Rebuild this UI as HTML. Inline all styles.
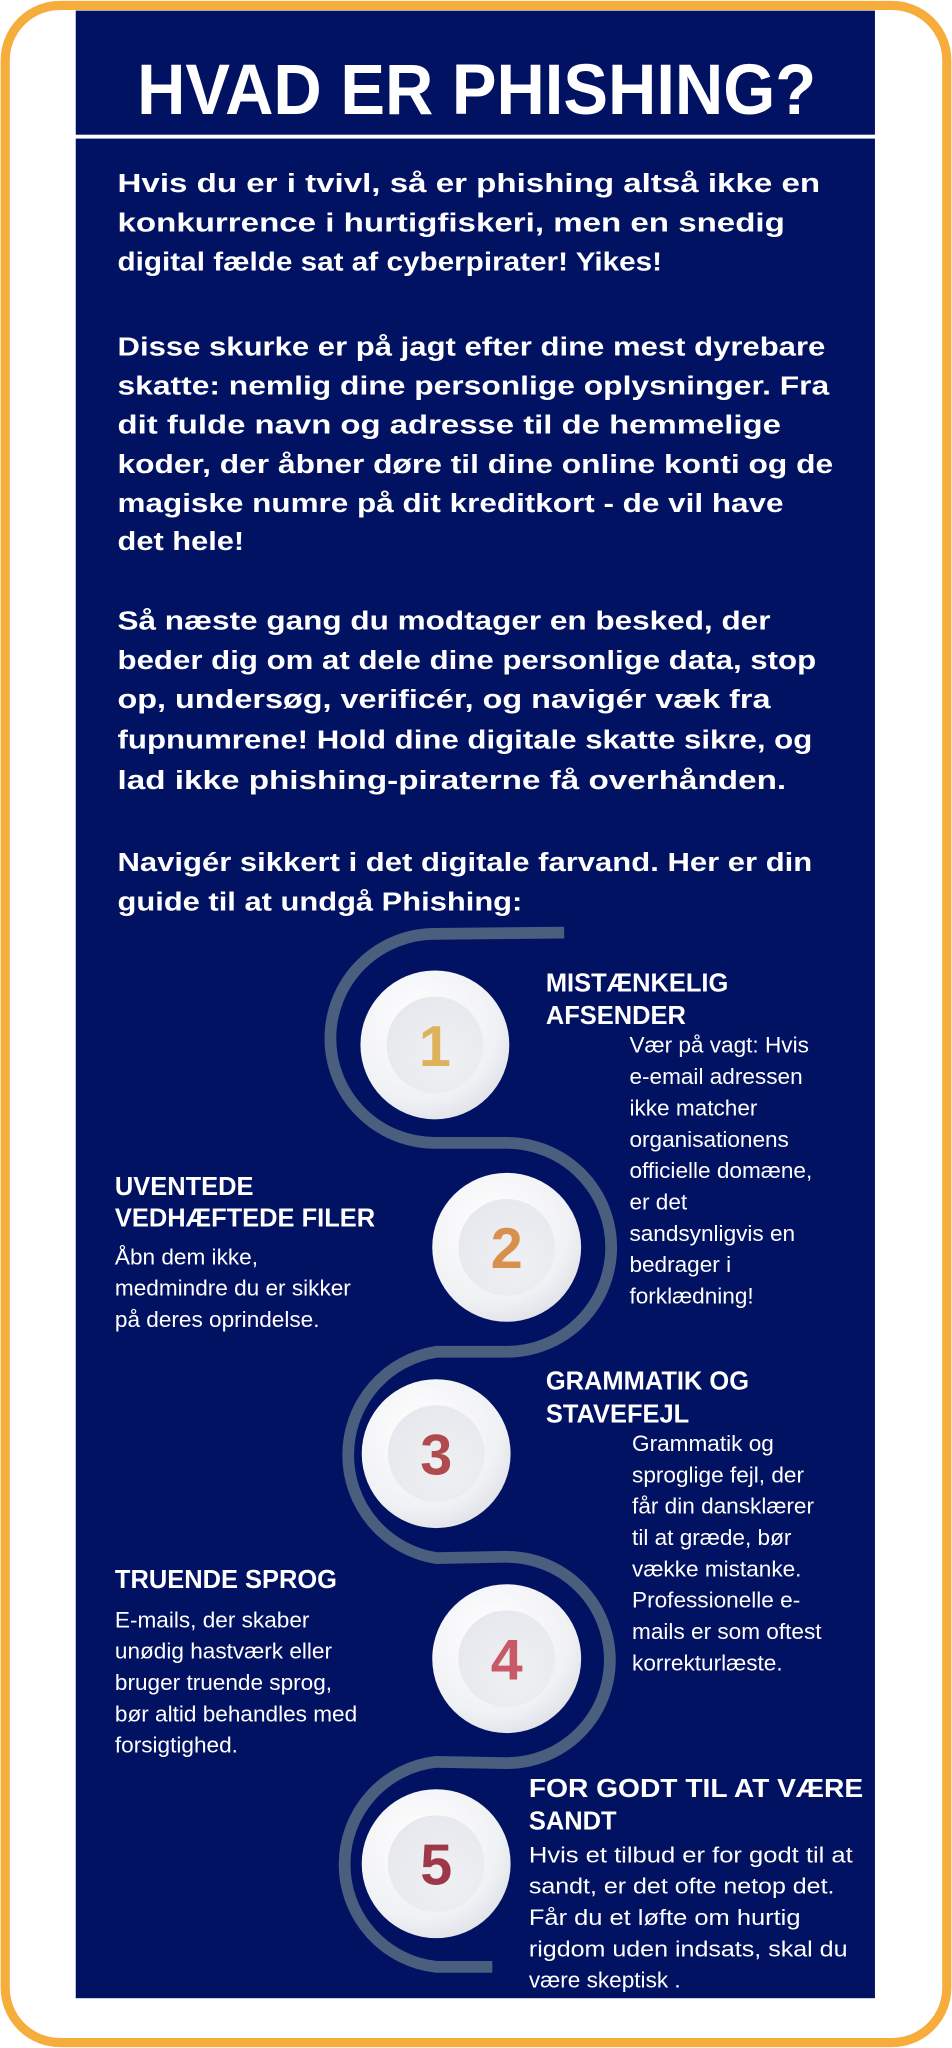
<!DOCTYPE html>
<html><head><meta charset="utf-8"><style>
html,body{margin:0;padding:0;background:#fff;}
svg{display:block;}
text{font-family:"Liberation Sans",sans-serif;}
.b{font-weight:bold;fill:#fff;font-size:20px;}
.h{font-weight:bold;fill:#fff;font-size:19.5px;}
.d{fill:#fff;font-size:17.3px;}
.n{font-weight:900;font-size:44px;}
</style></head><body>
<svg width="952" height="2048" viewBox="0 0 729 1568" xmlns="http://www.w3.org/2000/svg">
<defs>
<radialGradient id="g" cx="0.4" cy="0.35" r="0.7"><stop offset="0" stop-color="#ffffff"/><stop offset="0.75" stop-color="#f0f1f4"/><stop offset="1" stop-color="#dfe1e8"/></radialGradient>
<radialGradient id="gi" cx="0.6" cy="0.65" r="0.7"><stop offset="0" stop-color="#eff0f3"/><stop offset="1" stop-color="#e6e8ed"/></radialGradient>
</defs>
<rect x="4" y="4" width="721" height="1560" rx="42" fill="#fff" stroke="#f6ad3c" stroke-width="7"/>
<rect x="58" y="8" width="612" height="95" fill="#021262"/>
<rect x="58" y="106" width="612" height="1424" fill="#021262"/>
<text x="365" y="87" text-anchor="middle" font-size="55" font-weight="bold" fill="#fff" textLength="520" lengthAdjust="spacingAndGlyphs">HVAD ER PHISHING?</text>
<g class="b">
<text x="90" y="147" textLength="538" lengthAdjust="spacingAndGlyphs">Hvis du er i tvivl, så er phishing altså ikke en</text>
<text x="90" y="177" textLength="511" lengthAdjust="spacingAndGlyphs">konkurrence i hurtigfiskeri, men en snedig</text>
<text x="90" y="207" textLength="417" lengthAdjust="spacingAndGlyphs">digital fælde sat af cyberpirater! Yikes!</text>
<text x="90" y="272" textLength="542" lengthAdjust="spacingAndGlyphs">Disse skurke er på jagt efter dine mest dyrebare</text>
<text x="90" y="302" textLength="545" lengthAdjust="spacingAndGlyphs">skatte: nemlig dine personlige oplysninger. Fra</text>
<text x="90" y="332" textLength="508" lengthAdjust="spacingAndGlyphs">dit fulde navn og adresse til de hemmelige</text>
<text x="90" y="362" textLength="548" lengthAdjust="spacingAndGlyphs">koder, der åbner døre til dine online konti og de</text>
<text x="90" y="392" textLength="510" lengthAdjust="spacingAndGlyphs">magiske numre på dit kreditkort - de vil have</text>
<text x="90" y="421" textLength="97" lengthAdjust="spacingAndGlyphs">det hele!</text>
<text x="90" y="482" textLength="500" lengthAdjust="spacingAndGlyphs">Så næste gang du modtager en besked, der</text>
<text x="90" y="512" textLength="535" lengthAdjust="spacingAndGlyphs">beder dig om at dele dine personlige data, stop</text>
<text x="90" y="542" textLength="500" lengthAdjust="spacingAndGlyphs">op, undersøg, verificér, og navigér væk fra</text>
<text x="90" y="573" textLength="532" lengthAdjust="spacingAndGlyphs">fupnumrene! Hold dine digitale skatte sikre, og</text>
<text x="90" y="604" textLength="512" lengthAdjust="spacingAndGlyphs">lad ikke phishing-piraterne få overhånden.</text>
<text x="90" y="667" textLength="532" lengthAdjust="spacingAndGlyphs">Navigér sikkert i det digitale farvand. Her er din</text>
<text x="90" y="697" textLength="310" lengthAdjust="spacingAndGlyphs">guide til at undgå Phishing:</text>
</g>
<path d="M432 714 L333 715 A80 80 0 0 0 333 875 L388 875 A80 80 0 0 1 388 1035 L334 1035 A80 80 0 0 0 334 1193 L388 1192 A79 79 0 0 1 388 1350 L334 1349 A79 79 0 0 0 334 1506 L377 1506" fill="none" stroke="#4a5e7e" stroke-width="9"/>
<g>
<circle cx="333" cy="800" r="57" fill="url(#g)"/><circle cx="333" cy="800" r="37" fill="url(#gi)"/>
<text class="n" x="333" y="816" text-anchor="middle" fill="#dcb25a">1</text>
<circle cx="388" cy="955" r="57" fill="url(#g)"/><circle cx="388" cy="955" r="37" fill="url(#gi)"/>
<text class="n" x="388" y="971" text-anchor="middle" fill="#d8904c">2</text>
<circle cx="334" cy="1113" r="57" fill="url(#g)"/><circle cx="334" cy="1113" r="37" fill="url(#gi)"/>
<text class="n" x="334" y="1129" text-anchor="middle" fill="#b04a4e">3</text>
<circle cx="388" cy="1270" r="57" fill="url(#g)"/><circle cx="388" cy="1270" r="37" fill="url(#gi)"/>
<text class="n" x="388" y="1286" text-anchor="middle" fill="#c85a68">4</text>
<circle cx="334" cy="1427" r="57" fill="url(#g)"/><circle cx="334" cy="1427" r="37" fill="url(#gi)"/>
<text class="n" x="334" y="1443" text-anchor="middle" fill="#9e3848">5</text>
</g>
<g class="h">
<text x="418" y="759">MISTÆNKELIG</text><text x="418" y="784">AFSENDER</text>
<text x="88" y="915">UVENTEDE</text><text x="88" y="939">VEDHÆFTEDE FILER</text>
<text x="418" y="1064">GRAMMATIK OG</text><text x="418" y="1089">STAVEFEJL</text>
<text x="88" y="1216">TRUENDE SPROG</text>
<text x="405" y="1376" textLength="256" lengthAdjust="spacingAndGlyphs">FOR GODT TIL AT VÆRE</text><text x="405" y="1401">SANDT</text>
</g>
<g class="d">
<text x="482" y="806">Vær på vagt: Hvis</text>
<text x="482" y="830">e-email adressen</text>
<text x="482" y="854">ikke matcher</text>
<text x="482" y="878">organisationens</text>
<text x="482" y="902">officielle domæne,</text>
<text x="482" y="926">er det</text>
<text x="482" y="950">sandsynligvis en</text>
<text x="482" y="974">bedrager i</text>
<text x="482" y="998">forklædning!</text>
<text x="88" y="968">Åbn dem ikke,</text>
<text x="88" y="992">medmindre du er sikker</text>
<text x="88" y="1016">på deres oprindelse.</text>
<text x="484" y="1111">Grammatik og</text>
<text x="484" y="1135">sproglige fejl, der</text>
<text x="484" y="1159">får din dansklærer</text>
<text x="484" y="1183">til at græde, bør</text>
<text x="484" y="1207">vække mistanke.</text>
<text x="484" y="1231">Professionelle e-</text>
<text x="484" y="1255">mails er som oftest</text>
<text x="484" y="1279">korrekturlæste.</text>
<text x="88" y="1246">E-mails, der skaber</text>
<text x="88" y="1270">unødig hastværk eller</text>
<text x="88" y="1294">bruger truende sprog,</text>
<text x="88" y="1318">bør altid behandles med</text>
<text x="88" y="1342">forsigtighed.</text>
<text x="405" y="1426" textLength="248" lengthAdjust="spacingAndGlyphs">Hvis et tilbud er for godt til at</text>
<text x="405" y="1450" textLength="234" lengthAdjust="spacingAndGlyphs">sandt, er det ofte netop det.</text>
<text x="405" y="1474" textLength="208" lengthAdjust="spacingAndGlyphs">Får du et løfte om hurtig</text>
<text x="405" y="1498" textLength="244" lengthAdjust="spacingAndGlyphs">rigdom uden indsats, skal du</text>
<text x="405" y="1522">være skeptisk .</text>
</g>
</svg>
</body></html>
